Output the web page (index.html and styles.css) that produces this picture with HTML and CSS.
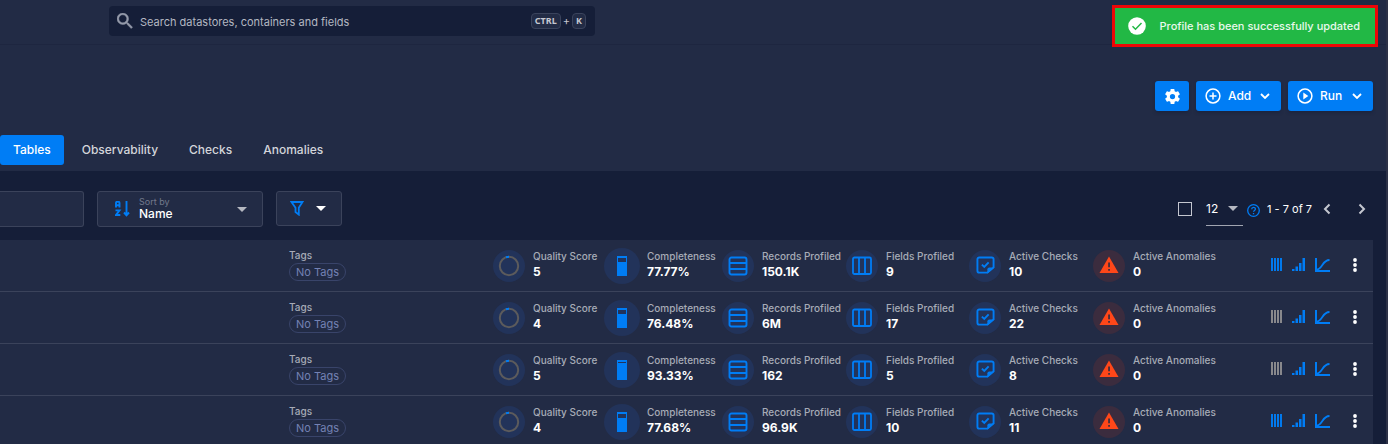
FILE: index.html
```html
<!DOCTYPE html>
<html lang="en">
<head>
<meta charset="utf-8">
<title>Datastore tables</title>
<link rel="stylesheet" href="styles.css">
</head>
<body>
<svg class="sprite" aria-hidden="true">
  <symbol id="i-ring" viewBox="0 0 22 22"><circle cx="11" cy="11" r="9.2" fill="none" stroke="#5c5b5c" stroke-width="2"/><path d="M8 2.300q1.500-.5 3-.5" fill="none" stroke="#007df5" stroke-width="2"/></symbol>
  <symbol id="i-records" viewBox="0 0 20 20" fill="none" stroke="#007df5" stroke-width="1.900"><rect x="1.500" y="1.500" width="17" height="17" rx="2"/><path d="M1.500 7h17M1.500 13h17"/></symbol>
  <symbol id="i-fields" viewBox="0 0 20 20" fill="none" stroke="#007df5" stroke-width="1.800"><rect x="1" y="1.500" width="18" height="16.500" rx="1.500"/><path d="M7 1.500V18M13 1.500V18"/></symbol>
  <symbol id="i-check" viewBox="0 0 20 20"><path d="M18.500 12V3.500a2 2 0 0 0-2-2h-13a2 2 0 0 0-2 2v12a2 2 0 0 0 2 2H12z" fill="none" stroke="#007df5" stroke-width="2"/><path d="M12 18.500V14q0-2 2-2h5.500z" fill="#007df5"/><path d="M6.200 9l2.500 2.500 4.600-4.800" fill="none" stroke="#007df5" stroke-width="2"/></symbol>
  <symbol id="i-warn" viewBox="0 0 20 20"><path d="M10 .5L19.500 17H.5z" fill="#ff4719"/><path d="M9.200 6.500h1.700v4.800H9.200zM9.200 13h1.700v1.800H9.200z" fill="#3b2c3e"/></symbol>
  <symbol id="i-lines" viewBox="0 0 12 14"><path d="M1 0v13M4 0v13M7 0v13M10 0v13" stroke="currentColor" stroke-width="1.900"/></symbol>
  <symbol id="i-bars" viewBox="0 0 14 14"><path d="M0 11h2.500v2H0zM3.500 8.500H6V13H3.500zM7 5h2.500v8H7zM10.500 0H13v13h-2.500z" fill="#007df5"/></symbol>
  <symbol id="i-curve" viewBox="0 0 15 15" fill="none" stroke="#007df5"><path d="M1 0v13h14" stroke-width="2"/><path d="M1.500 11.500C7.500 11.500 7 2 14.500 2" stroke-width="1.800"/></symbol>
  <symbol id="i-dots" viewBox="0 0 6 14"><g fill="#fff"><circle cx="3" cy="2" r="1.900"/><circle cx="3" cy="7" r="1.900"/><circle cx="3" cy="12" r="1.900"/></g></symbol>
  <symbol id="i-down" viewBox="0 0 10 6"><path d="M1 1l4 4 4-4" fill="none" stroke="currentColor" stroke-width="1.800"/></symbol>
  <symbol id="i-caret" viewBox="0 0 10 5"><path d="M0 0h10L5 5z" fill="currentColor"/></symbol>
</svg>

<header class="topbar">
  <label class="search">
    <svg width="16" height="16" viewBox="3 3 18 18" aria-hidden="true"><path fill="#959aaa" stroke="#959aaa" stroke-width=".5" d="M9.500 3A6.500 6.500 0 0 1 16 9.500c0 1.610-.59 3.090-1.560 4.230l.27.270h.79l5 5-1.500 1.500-5-5v-.79l-.27-.27A6.516 6.516 0 0 1 9.500 16a6.500 6.500 0 0 1 0-13m0 2C7 5 5 7 5 9.500S7 14 9.500 14 14 12 14 9.500 12 5 9.500 5z"/></svg>
    <input class="search-input" type="text" placeholder="Search datastores, containers and fields" aria-label="Search">
    <span class="keys"><kbd>CTRL</kbd>+<kbd>K</kbd></span>
  </label>
  <div class="toast" role="status">
    <svg width="18" height="18" viewBox="0 0 18 18" aria-hidden="true"><circle cx="9" cy="9" r="8.800" fill="#fff"/><path d="M4.500 9.200l3 3L13.500 6" fill="none" stroke="#22b845" stroke-width="1.500"/></svg>
    <span>Profile has been successfully updated</span>
  </div>
</header>

<section class="head">
  <div class="commands">
    <button class="btn btn-icon" aria-label="Settings"><svg width="15" height="15" viewBox="2 2 20 20"><path fill="#fff" d="M12 15.500A3.500 3.500 0 0 1 8.500 12 3.500 3.500 0 0 1 12 8.500a3.500 3.500 0 0 1 3.500 3.500 3.500 3.500 0 0 1-3.500 3.500m7.430-2.530c.04-.32.070-.64.070-.97s-.03-.66-.07-1l2.110-1.630c.19-.15.24-.42.120-.64l-2-3.460c-.12-.22-.39-.31-.61-.22l-2.490 1c-.52-.39-1.060-.73-1.690-.98l-.37-2.650A.506.506 0 0 0 14 2h-4c-.25 0-.46.180-.5.420l-.37 2.650c-.63.250-1.170.59-1.690.98l-2.490-1c-.22-.09-.49 0-.61.220l-2 3.460c-.13.220-.07.490.120.640L4.570 11c-.04.340-.07.670-.07 1s.03.650.070.970l-2.110 1.660c-.19.150-.25.420-.12.640l2 3.460c.12.220.39.300.61.220l2.490-1.010c.52.400 1.060.74 1.690.99l.37 2.650c.04.240.25.420.5.420h4c.25 0 .46-.18.5-.42l.37-2.650c.63-.26 1.170-.59 1.690-.99l2.490 1.010c.22.080.49 0 .61-.22l2-3.460c.12-.22.070-.49-.12-.64z"/></svg></button>
    <button class="btn"><svg width="16" height="16" viewBox="0 0 16 16" fill="none" stroke="#fff" stroke-width="1.500"><circle cx="8" cy="8" r="6.900"/><path d="M8 4.500v7M4.500 8h7"/></svg><span>Add</span><svg class="chev" width="10" height="6"><use href="#i-down"/></svg></button>
    <button class="btn"><svg width="16" height="16" viewBox="0 0 16 16"><circle cx="8" cy="8" r="6.900" fill="none" stroke="#fff" stroke-width="1.500"/><path d="M6.300 4.600l5 3.400-5 3.400z" fill="#fff"/></svg><span>Run</span><svg class="chev" width="10" height="6"><use href="#i-down"/></svg></button>
  </div>
  <nav class="tabs">
    <a class="tab tab-active" href="#tables">Tables</a>
    <a class="tab" href="#observability">Observability</a>
    <a class="tab" href="#checks">Checks</a>
    <a class="tab" href="#anomalies">Anomalies</a>
  </nav>
</section>

<main class="content">
  <div class="filters">
    <input class="field field-search" type="text" aria-label="Search tables">
    <button class="field field-sort">
      <svg width="16" height="16" viewBox="0 0 16 16" fill="none" stroke="#007df5" stroke-width="1.900" aria-hidden="true"><path d="M1 6.500V2q0-1.200 1-1.200h1.500q1 0 1 1.200v4.500M1 4.300h3.500M.5 9.400h4L1 14h4.300"/><path d="M11.500 0v14M9 11.500l2.500 2.800 2.500-2.800"/></svg>
      <span class="sort-text"><span class="sort-label">Sort by</span><span class="sort-value">Name</span></span>
      <svg class="muted" width="10" height="5"><use href="#i-caret"/></svg>
    </button>
    <button class="field field-filter" aria-label="Filter">
      <svg width="14" height="15" viewBox="0 0 14 15"><path d="M1.500 1h11L8.800 6.800v6.800L5.500 11V6.800z" fill="none" stroke="#007df5" stroke-width="1.800"/></svg>
      <svg width="10" height="5"><use href="#i-caret"/></svg>
    </button>
    <div class="pager">
      <input class="tick" type="checkbox" aria-label="Select all">
      <button class="size" aria-label="Rows per page"><span>12</span><svg class="muted" width="10" height="5"><use href="#i-caret"/></svg></button>
      <svg class="help" width="13" height="13" viewBox="0 0 13 13" fill="none" stroke="#007df5" stroke-width="1.300"><circle cx="6.500" cy="6.500" r="5.800"/><path d="M4.700 5.200c0-2.400 3.700-2.300 3.700-.2 0 1.400-1.900 1.400-1.900 2.800M6.500 9v1.300"/></svg>
      <span class="range">1 - 7 of 7</span>
      <button class="page-btn" aria-label="Previous page"><svg width="8" height="12" viewBox="0 0 8 12"><path d="M6.500 1.500L2 6l4.500 4.500" fill="none" stroke="#c4c7d0" stroke-width="2"/></svg></button>
      <button class="page-btn" aria-label="Next page"><svg width="8" height="12" viewBox="0 0 8 12"><path d="M1.500 1.500L6 6l-4.500 4.500" fill="none" stroke="#c4c7d0" stroke-width="2"/></svg></button>
    </div>
  </div>

  <div class="rows">
    <article class="row">
      <div class="tags"><span class="label">Tags</span><span class="chip">No Tags</span></div>
      <div class="metric"><span class="disc"><svg width="22" height="22"><use href="#i-ring"/></svg></span><span class="stat"><span class="label">Quality Score</span><b>5</b></span></div>
      <div class="metric"><span class="disc disc-lg"><span class="gauge"><i style="height:4px"></i></span></span><span class="stat"><span class="label">Completeness</span><b>77.77%</b></span></div>
      <div class="metric"><span class="disc"><svg width="20" height="20"><use href="#i-records"/></svg></span><span class="stat"><span class="label">Records Profiled</span><b>150.1K</b></span></div>
      <div class="metric"><span class="disc"><svg width="20" height="20"><use href="#i-fields"/></svg></span><span class="stat"><span class="label">Fields Profiled</span><b>9</b></span></div>
      <div class="metric"><span class="disc"><svg width="19" height="19"><use href="#i-check"/></svg></span><span class="stat"><span class="label">Active Checks</span><b>10</b></span></div>
      <div class="metric"><span class="disc disc-warn"><svg width="20" height="20"><use href="#i-warn"/></svg></span><span class="stat"><span class="label">Active Anomalies</span><b>0</b></span></div>
      <div class="actions"><svg class="on" width="12" height="14"><use href="#i-lines"/></svg><svg width="14" height="14"><use href="#i-bars"/></svg><svg width="15" height="15"><use href="#i-curve"/></svg><button class="more" aria-label="More"><svg width="6" height="14"><use href="#i-dots"/></svg></button></div>
    </article>
    <article class="row">
      <div class="tags"><span class="label">Tags</span><span class="chip">No Tags</span></div>
      <div class="metric"><span class="disc"><svg width="22" height="22"><use href="#i-ring"/></svg></span><span class="stat"><span class="label">Quality Score</span><b>4</b></span></div>
      <div class="metric"><span class="disc disc-lg"><span class="gauge"><i style="height:4px"></i></span></span><span class="stat"><span class="label">Completeness</span><b>76.48%</b></span></div>
      <div class="metric"><span class="disc"><svg width="20" height="20"><use href="#i-records"/></svg></span><span class="stat"><span class="label">Records Profiled</span><b>6M</b></span></div>
      <div class="metric"><span class="disc"><svg width="20" height="20"><use href="#i-fields"/></svg></span><span class="stat"><span class="label">Fields Profiled</span><b>17</b></span></div>
      <div class="metric"><span class="disc"><svg width="19" height="19"><use href="#i-check"/></svg></span><span class="stat"><span class="label">Active Checks</span><b>22</b></span></div>
      <div class="metric"><span class="disc disc-warn"><svg width="20" height="20"><use href="#i-warn"/></svg></span><span class="stat"><span class="label">Active Anomalies</span><b>0</b></span></div>
      <div class="actions"><svg class="off" width="12" height="14"><use href="#i-lines"/></svg><svg width="14" height="14"><use href="#i-bars"/></svg><svg width="15" height="15"><use href="#i-curve"/></svg><button class="more" aria-label="More"><svg width="6" height="14"><use href="#i-dots"/></svg></button></div>
    </article>
    <article class="row">
      <div class="tags"><span class="label">Tags</span><span class="chip">No Tags</span></div>
      <div class="metric"><span class="disc"><svg width="22" height="22"><use href="#i-ring"/></svg></span><span class="stat"><span class="label">Quality Score</span><b>5</b></span></div>
      <div class="metric"><span class="disc disc-lg"><span class="gauge"><i style="height:1px"></i></span></span><span class="stat"><span class="label">Completeness</span><b>93.33%</b></span></div>
      <div class="metric"><span class="disc"><svg width="20" height="20"><use href="#i-records"/></svg></span><span class="stat"><span class="label">Records Profiled</span><b>162</b></span></div>
      <div class="metric"><span class="disc"><svg width="20" height="20"><use href="#i-fields"/></svg></span><span class="stat"><span class="label">Fields Profiled</span><b>5</b></span></div>
      <div class="metric"><span class="disc"><svg width="19" height="19"><use href="#i-check"/></svg></span><span class="stat"><span class="label">Active Checks</span><b>8</b></span></div>
      <div class="metric"><span class="disc disc-warn"><svg width="20" height="20"><use href="#i-warn"/></svg></span><span class="stat"><span class="label">Active Anomalies</span><b>0</b></span></div>
      <div class="actions"><svg class="off" width="12" height="14"><use href="#i-lines"/></svg><svg width="14" height="14"><use href="#i-bars"/></svg><svg width="15" height="15"><use href="#i-curve"/></svg><button class="more" aria-label="More"><svg width="6" height="14"><use href="#i-dots"/></svg></button></div>
    </article>
    <article class="row">
      <div class="tags"><span class="label">Tags</span><span class="chip">No Tags</span></div>
      <div class="metric"><span class="disc"><svg width="22" height="22"><use href="#i-ring"/></svg></span><span class="stat"><span class="label">Quality Score</span><b>4</b></span></div>
      <div class="metric"><span class="disc disc-lg"><span class="gauge"><i style="height:4px"></i></span></span><span class="stat"><span class="label">Completeness</span><b>77.68%</b></span></div>
      <div class="metric"><span class="disc"><svg width="20" height="20"><use href="#i-records"/></svg></span><span class="stat"><span class="label">Records Profiled</span><b>96.9K</b></span></div>
      <div class="metric"><span class="disc"><svg width="20" height="20"><use href="#i-fields"/></svg></span><span class="stat"><span class="label">Fields Profiled</span><b>10</b></span></div>
      <div class="metric"><span class="disc"><svg width="19" height="19"><use href="#i-check"/></svg></span><span class="stat"><span class="label">Active Checks</span><b>11</b></span></div>
      <div class="metric"><span class="disc disc-warn"><svg width="20" height="20"><use href="#i-warn"/></svg></span><span class="stat"><span class="label">Active Anomalies</span><b>0</b></span></div>
      <div class="actions"><svg class="on" width="12" height="14"><use href="#i-lines"/></svg><svg width="14" height="14"><use href="#i-bars"/></svg><svg width="15" height="15"><use href="#i-curve"/></svg><button class="more" aria-label="More"><svg width="6" height="14"><use href="#i-dots"/></svg></button></div>
    </article>
  </div>
</main>
</body>
</html>
```
FILE: styles.css
```css
* { box-sizing: border-box; }
body {
  margin: 0;
  height: 100vh;
  overflow: hidden;
  background: #151e38;
  border-right: 2px solid #2c3147;
  color: #fff;
  font-family: Inter, "Liberation Sans", sans-serif;
  font-size: 12px;
  line-height: 16px;
}
svg { display: block; flex: none; }
.sprite { position: absolute; width: 0; height: 0; }
button, input { font: inherit; color: inherit; margin: 0; }
button { border: 0; background: none; padding: 0; }

.topbar {
  display: flex;
  align-items: flex-start;
  justify-content: space-between;
  height: 45px;
  padding: 5px 8px 0 109px;
  background: #222b45;
  border-bottom: 1px solid #1e2640;
}
.search {
  display: flex;
  align-items: center;
  width: 486px;
  height: 30px;
  margin-top: 1px;
  padding: 0 9px 0 8px;
  gap: 7px;
  background: #151e38;
  border-radius: 4px;
}
.search-input {
  flex: 1;
  min-width: 0;
  padding: 2px 0 0;
  border: 0;
  background: none;
  font-size: 11px;
}
.search-input::placeholder { color: #b3b7c1; opacity: 1; }
.keys { display: flex; align-items: center; gap: 2px; font-size: 11px; color: #c4c7d0; }
kbd {
  padding: 0 3px;
  border: 1px solid #3a435c;
  border-radius: 4px;
  background: #222b45;
  font: bold 9px/14px "Noto Sans", sans-serif;
}
.toast {
  display: flex;
  align-items: center;
  gap: 14px;
  height: 42px;
  padding: 0 15px 0 13px;
  border: 3px solid #f00606;
  background: #22b845;
  color: #e9f8ec;
  white-space: nowrap;
  font-size: 11px;
  font-weight: 500;
}

.head { height: 126px; padding-top: 36px; background: #222b45; }
.commands { display: flex; justify-content: flex-end; gap: 7px; padding-right: 13px; }
.btn {
  display: flex;
  align-items: center;
  gap: 7px;
  width: 85px;
  height: 30px;
  padding: 0 11px 0 9px;
  border-radius: 3px;
  background: #007df5;
  font-weight: 500;
  box-shadow: 0 2px 3px #151e3880;
}
.btn-icon { width: 34px; justify-content: center; padding: 0; }
.chev { margin-left: auto; }
.tabs { display: flex; margin-top: 24px; gap: 5px; }
.tab {
  padding: 7px 13px;
  border-radius: 3px;
  color: #d3d5da;
  font-weight: 500;
  text-decoration: none;
}
.tab-active { background: #007df5; color: #fff; }

.content { padding: 20px 13px 0 0; }
.filters { display: flex; align-items: flex-start; gap: 13px; }
.field {
  display: flex;
  align-items: center;
  height: 36px;
  border: 1px solid #3b435b;
  border-radius: 3px;
  background: #222b45;
}
.field-search { width: 84px; border-left: 0; border-radius: 0 3px 3px 0; }
.field-sort { width: 166px; padding: 0 15px 0 17px; gap: 8px; text-align: left; }
.field-filter { width: 66px; height: 35px; padding-right: 2px; justify-content: center; gap: 12px; }
.sort-text { display: flex; flex: 1; flex-direction: column; }
.sort-label { color: #737a8c; font-size: 9px; line-height: 10px; }
.sort-value { font-weight: 500; line-height: 14px; }
.muted { color: #b5b8c1; }
.pager { display: flex; align-items: center; height: 36px; margin-left: auto; padding-right: 7px; }
.tick { appearance: none; width: 14px; height: 14px; border: 1px solid #c4c7d0; }
.size {
  display: flex;
  align-items: center;
  justify-content: space-between;
  width: 37px;
  height: 34px;
  margin-left: 14px;
  padding: 0 5px 0 0;
  border-bottom: 1px solid #a1a5b1;
}
.help { margin: 2px 7px 0 4px; }
.range { width: 45px; white-space: nowrap; font-size: 11px; }
.page-btn { margin-left: 11px; }
.page-btn + .page-btn { margin-left: 27px; }

.rows { margin-top: 13px; }
.row {
  display: grid;
  grid-template-columns: 1fr 111px 118px 124px 123px 124px 177px 103px;
  height: 52px;
  padding-left: 289px;
  border-bottom: 1px solid #3b435b;
  background: #222b45;
}
.label { color: #a7abb7; font-size: 10px; font-weight: 500; line-height: 14px; white-space: nowrap; }
.tags { display: flex; flex-direction: column; align-items: flex-start; padding-top: 8px; }
.chip {
  margin-top: 1px;
  padding: 0 6px;
  border: 1px solid #39446a;
  border-radius: 9px;
  color: #7482b4;
  font-size: 11px;
  line-height: 16px;
}
.metric { display: flex; align-items: center; gap: 7px; }
.disc {
  display: flex;
  align-items: center;
  justify-content: center;
  flex: none;
  width: 32px;
  height: 32px;
  margin-right: 1px;
  border-radius: 50%;
  background: #22335a;
}
.disc-lg { width: 36px; height: 36px; margin-right: 0; }
.disc-warn { background: #3b2c3e; }
.gauge { width: 10px; height: 20px; padding: 2px 1px; background: #007df5; }
.gauge i { display: block; background: #22335a; }
.stat { display: flex; flex-direction: column; gap: 1px; padding-bottom: 3px; }
.stat b { font-weight: 700; font-size: 12px; line-height: 15px; }
.actions { display: flex; align-items: center; gap: 9px; padding-bottom: 1px; padding-left: 1px; }
.on { color: #007df5; }
.off { color: #8e8d90; }
.more { margin-left: 13px; }
```
